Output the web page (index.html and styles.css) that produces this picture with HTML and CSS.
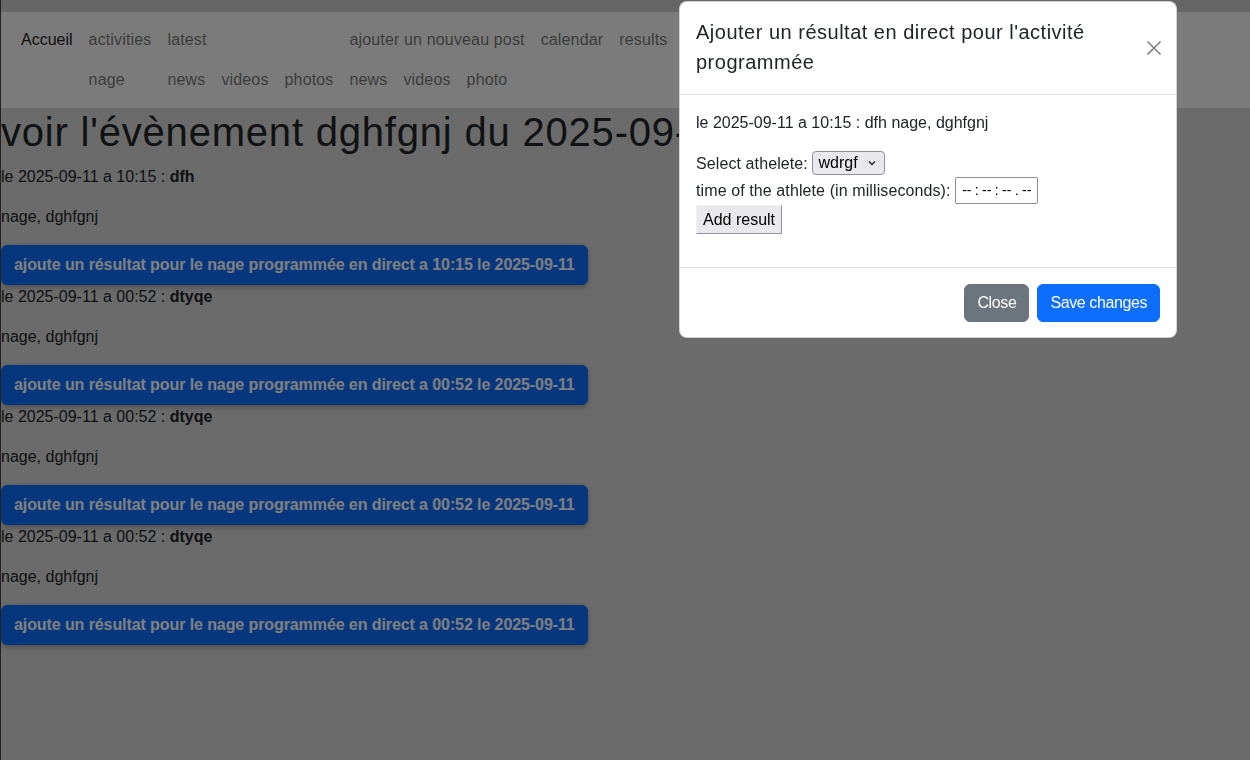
FILE: index.html
```html
<!DOCTYPE html>
<html lang="fr">
<head>
<meta charset="utf-8">
<title>voir l'évènement</title>
<link rel="stylesheet" href="styles.css">
</head>
<body>
<div class="topstrip"></div>
<nav class="navbar">
  <ul class="nav">
    <li class="nav-item"><a class="link active" href="#">Accueil</a></li>
    <li class="nav-item"><a class="link" href="#">activities</a>
      <ul class="sub"><li><a class="link" href="#">nage</a></li></ul>
    </li>
    <li class="nav-item"><a class="link" href="#">latest</a>
      <ul class="sub">
        <li><a class="link" href="#">news</a></li>
        <li><a class="link" href="#">videos</a></li>
        <li><a class="link" href="#">photos</a></li>
      </ul>
    </li>
    <li class="nav-item"><a class="link" href="#">ajouter un nouveau post</a>
      <ul class="sub">
        <li><a class="link" href="#">news</a></li>
        <li><a class="link" href="#">videos</a></li>
        <li><a class="link" href="#">photo</a></li>
      </ul>
    </li>
    <li class="nav-item"><a class="link" href="#">calendar</a></li>
    <li class="nav-item"><a class="link" href="#">results</a></li>
  </ul>
</nav>
<main class="content">
  <h1 class="page-title">voir l'évènement dghfgnj du 2025-09-11</h1>
  <section class="event">
    <p>le 2025-09-11 a 10:15 : <b>dfh</b></p>
    <p>nage, dghfgnj</p>
    <div><button class="live-btn">ajoute un résultat pour le nage programmée en direct a 10:15 le 2025-09-11</button></div>
  </section>
  <section class="event">
    <p>le 2025-09-11 a 00:52 : <b>dtyqe</b></p>
    <p>nage, dghfgnj</p>
    <div><button class="live-btn">ajoute un résultat pour le nage programmée en direct a 00:52 le 2025-09-11</button></div>
  </section>
  <section class="event">
    <p>le 2025-09-11 a 00:52 : <b>dtyqe</b></p>
    <p>nage, dghfgnj</p>
    <div><button class="live-btn">ajoute un résultat pour le nage programmée en direct a 00:52 le 2025-09-11</button></div>
  </section>
  <section class="event">
    <p>le 2025-09-11 a 00:52 : <b>dtyqe</b></p>
    <p>nage, dghfgnj</p>
    <div><button class="live-btn">ajoute un résultat pour le nage programmée en direct a 00:52 le 2025-09-11</button></div>
  </section>
</main>
<div class="backdrop"></div>
<div class="modal">
  <div class="modal-header">
    <h5 class="modal-title">Ajouter un résultat en direct pour l'activité programmée</h5>
    <button class="btn-close" aria-label="Close">
      <svg width="16" height="16" viewBox="0 0 16 16"><path d="M1.5 1.5L14.5 14.5M14.5 1.5L1.5 14.5" stroke="#000" stroke-width="1.6" fill="none"/></svg>
    </button>
  </div>
  <div class="modal-body">
    <p>le 2025-09-11 a 10:15 : dfh nage, dghfgnj</p>
    <form class="result-form">
      <div class="row">Select athelete:&nbsp;<span class="ff-select">wdrgf<svg width="8" height="6" viewBox="0 0 8 6"><path d="M1 1.5L4 4.5L7 1.5" stroke="#222" stroke-width="1.4" fill="none"/></svg></span></div>
      <div class="row">time of the athlete (in milliseconds):&nbsp;<span class="ff-time">-- : -- : -- . --</span></div>
      <div class="row"><span class="ff-button">Add result</span></div>
    </form>
  </div>
  <div class="modal-footer">
    <button class="btn btn-secondary">Close</button>
    <button class="btn btn-primary">Save changes</button>
  </div>
</div>
</body>
</html>
```
FILE: styles.css
```css
html { height: 100%; }
body {
  margin: 0;
  min-height: 100%;
  box-sizing: border-box;
  font-family: "Liberation Sans", Arial, sans-serif;
  font-size: 16px;
  line-height: 1.5;
  color: #212529;
  background: #d6d6d6;
  border-left: 1px solid #4e3f47;
}
.topstrip { height: 12px; background: #cdcdcd; }
.navbar { background: #f6f6f6; padding: 8px 0 8px 12px; }
.nav, .sub { list-style: none; margin: 0; padding: 0; display: flex; }
.nav { align-items: flex-start; }
.link {
  display: block;
  padding: 8px;
  color: rgba(0,0,0,.55);
  text-decoration: none;
  letter-spacing: 0.15px;
}
.link.active { color: rgba(0,0,0,.9); letter-spacing: 0; }

.content { padding: 0; }
.page-title {
  margin: 0 0 9px;
  font-size: 40px;
  font-weight: 500;
  line-height: 1.2;
  letter-spacing: 0.8px;
  white-space: nowrap;
}
.event p { margin: 0 0 16px; }
.event b { font-weight: 700; }
.live-btn {
  display: inline-block;
  font-family: inherit;
  font-size: 16px;
  line-height: 24px;
  font-weight: 700;
  letter-spacing: -0.09px;
  padding: 7px 12px;
  color: #fff;
  background: #0d6efd;
  border: 1px solid #0d6efd;
  border-radius: 6px;
  box-shadow: 0 2px 5px rgba(0,0,0,.3);
}

.backdrop { position: fixed; inset: 0; background: rgba(0,0,0,.5); }
.modal {
  position: fixed;
  top: 1px;
  left: 679px;
  width: 498px;
  box-sizing: border-box;
  background: #fff;
  border: 1px solid rgba(0,0,0,.175);
  border-radius: 8px;
}
.modal-header {
  display: flex;
  align-items: center;
  padding: 16px;
  border-bottom: 1px solid #dee2e6;
}
.modal-title {
  margin: -1px 0 1px;
  font-size: 20px;
  font-weight: 500;
  line-height: 1.5;
  letter-spacing: 0.5px;
  color: #212529;
}
.btn-close {
  flex: none;
  width: 24px;
  height: 24px;
  padding: 4px;
  margin: -8px -6px -8px auto;
  border: 0;
  background: transparent;
  opacity: .5;
  display: flex;
  align-items: center;
  justify-content: center;
}
.modal-body { padding: 16px; }
.modal-body p { margin: 0 0 16px; }
.result-form { margin: 0 0 17px; }
.row { display: flex; align-items: center; letter-spacing: 0.1px; }
.row:nth-child(1) { height: 25px; }
.row:nth-child(2) { height: 29px; }
.ff-select {
  display: inline-flex;
  align-items: center;
  gap: 10px;
  height: 24px;
  margin-top: -2px;
  box-sizing: border-box;
  padding: 0 8px 0 5px;
  border: 1px solid #8f8f9d;
  border-radius: 4px;
  background: #e9e9ed;
  color: #000;
  font-size: 16px;
  letter-spacing: 0;
}
.ff-time {
  display: inline-flex;
  align-items: center;
  height: 27px;
  box-sizing: border-box;
  padding: 0 6px;
  border: 1px solid #8f8f9d;
  border-radius: 2px;
  color: #000;
  font-size: 14px;
  letter-spacing: 0;
  word-spacing: -0.5px;
  white-space: pre;
}
.ff-button {
  display: inline-flex;
  align-items: center;
  height: 29px;
  box-sizing: border-box;
  padding: 0 6px;
  background: #e9e9ed;
  border: 1px solid;
  border-color: #f0f0f2 #8f8f9d #8f8f9d #f0f0f2;
  color: #000;
  letter-spacing: 0;
}
.modal-footer {
  display: flex;
  justify-content: flex-end;
  padding: 12px 12px 11px;
  border-top: 1px solid #dee2e6;
}
.btn {
  margin: 4px;
  padding: 6px 12px;
  font-family: inherit;
  font-size: 16px;
  line-height: 24px;
  color: #fff;
  border-radius: 6px;
  border: 1px solid transparent;
  letter-spacing: -0.4px;
}
.btn-secondary { background: #6c757d; border-color: #6c757d; }
.btn-primary { background: #0d6efd; border-color: #0d6efd; }
```
